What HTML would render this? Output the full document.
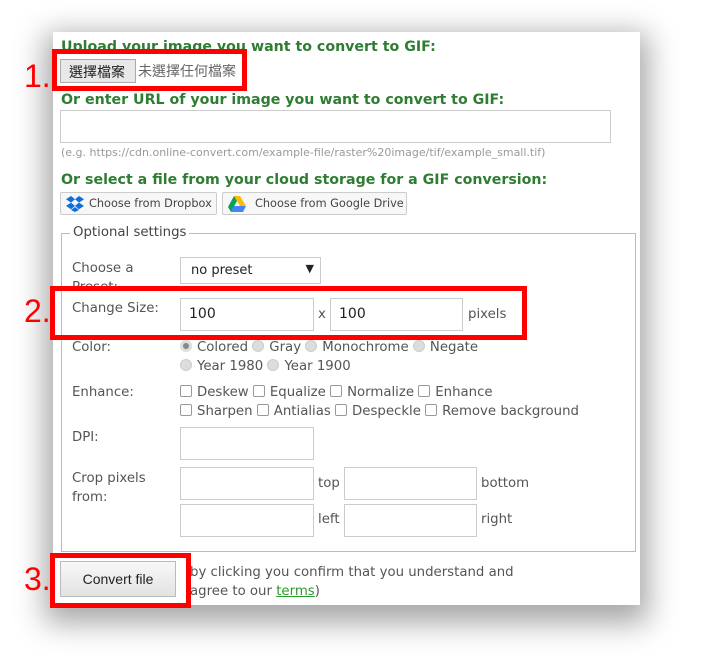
<!DOCTYPE html>
<html><head><meta charset="utf-8"><style>
*{box-sizing:border-box}
body{margin:0;width:706px;height:670px;background:#fff;font-family:"DejaVu Sans","Liberation Sans",sans-serif;font-size:13.3px;color:#555;position:relative;overflow:hidden}
.a{position:absolute;white-space:nowrap}
#panel{position:absolute;left:53px;top:32px;width:587px;height:573px;background:#fff;box-shadow:0 10px 28px 8px rgba(0,0,0,.35)}
h{position:absolute;font-weight:bold;color:#2e7d32;font-size:14.2px;white-space:nowrap}
.inp{position:absolute;border:1px solid #ccc;background:#fff;font-size:14px;color:#222;padding:7px 0 0 8px}
.red{position:absolute;border:5px solid #f00}
.num{position:absolute;color:#f00;font-size:32px;font-family:"Liberation Sans",sans-serif;line-height:32px}
.btn{position:absolute;border:1px solid #ccc;background:#f7f7f7;font-size:11.3px;color:#444;border-radius:2px;white-space:nowrap}
.rb{display:inline-block;width:12px;height:12px;border-radius:50%;background:#ddd;border:1px solid #ccc;vertical-align:-1px;margin-right:5px}
.cb{display:inline-block;width:12px;height:12px;border-radius:2px;background:#fff;border:1px solid #999;vertical-align:-1px;margin-right:5px}
</style></head><body>
<div id="panel"></div>
<h style="left:61px;top:39px">Upload your image you want to convert to GIF:</h>
<div class="a" style="left:60px;top:59px;width:76px;height:24px;border:1px solid #aaa;background:#e8e8e8;font-family:'Liberation Sans','Noto Sans CJK TC',sans-serif;font-size:14px;color:#222;padding:2px 0 0 8px">選擇檔案</div>
<div class="a" style="left:138px;top:61px;font-family:'Liberation Sans','Noto Sans CJK TC',sans-serif;font-size:14px;color:#666">未選擇任何檔案</div>
<div class="red" style="left:52px;top:49px;width:195px;height:42px"></div>
<div class="num" style="left:24px;top:60px">1.</div>
<h style="left:61px;top:92px">Or enter URL of your image you want to convert to GIF:</h>
<div class="inp" style="left:60px;top:110px;width:551px;height:33px"></div>
<div class="a" style="left:61px;top:146px;font-size:11px;color:#999">(e.g. https://cdn.online-convert.com/example-file/raster%20image/tif/example_small.tif)</div>
<h style="left:61px;top:172px">Or select a file from your cloud storage for a GIF conversion:</h>
<div class="btn" style="left:60px;top:192px;width:157px;height:23px;padding:4px 0 0 28px">Choose from Dropbox</div>
<svg class="a" style="left:66px;top:196px" width="18" height="16" viewBox="0 0 18 16"><g fill="#0d6fdc"><path d="M5 0L0 3.3 5 6.6 9 3.3z"/><path d="M13 0L9 3.3 13 6.6 18 3.3z"/><path d="M0 9.9L5 13.2 9 9.9 5 6.6z"/><path d="M18 9.9L13 13.2 9 9.9 13 6.6z"/><path d="M5 14L9 11 13 14 9 16z"/></g></svg>
<div class="btn" style="left:222px;top:192px;width:185px;height:23px;padding:4px 0 0 32px">Choose from Google Drive</div>
<svg class="a" style="left:228px;top:196px" width="18" height="16" viewBox="0 0 18 16"><path d="M6 0h6l6 10h-6z" fill="#fbbc04"/><path d="M6 0l3 5-6 11-3-5z" fill="#0f9d58"/><path d="M3 16l3-6h12l-3 6z" fill="#4285f4"/></svg>
<div class="a" style="left:61px;top:233px;width:575px;height:319px;border:1px solid #bbb"></div>
<div class="a" style="left:70px;top:225px;background:#fff;padding:0 3px;color:#444">Optional settings</div>
<div class="a" style="left:72px;top:259px;line-height:19px;height:27px;overflow:hidden;white-space:normal;width:80px">Choose a Preset:</div>
<div class="inp" style="left:180px;top:257px;width:141px;height:27px;padding:5px 0 0 10px;font-size:13px">no preset<span style="position:absolute;right:6px;top:4px;font-size:11px">▼</span></div>
<div class="a" style="left:72px;top:301px">Change Size:</div>
<div class="inp" style="left:180px;top:298px;width:134px;height:33px">100</div>
<div class="a" style="left:318px;top:307px">x</div>
<div class="inp" style="left:330px;top:298px;width:133px;height:33px">100</div>
<div class="a" style="left:468px;top:307px">pixels</div>
<div class="red" style="left:50px;top:286px;width:477px;height:54px"></div>
<div class="num" style="left:24px;top:295px">2.</div>
<div class="a" style="left:72px;top:340px">Color:</div>
<div class="a" style="left:180px;top:340px"><span class="rb" style="background:#888;border:3px solid #ddd"></span>Colored <span class="rb"></span>Gray <span class="rb"></span>Monochrome <span class="rb"></span>Negate</div>
<div class="a" style="left:180px;top:359px"><span class="rb"></span>Year 1980 <span class="rb"></span>Year 1900</div>
<div class="a" style="left:72px;top:385px">Enhance:</div>
<div class="a" style="left:180px;top:385px"><span class="cb"></span>Deskew <span class="cb"></span>Equalize <span class="cb"></span>Normalize <span class="cb"></span>Enhance</div>
<div class="a" style="left:180px;top:404px"><span class="cb"></span>Sharpen <span class="cb"></span>Antialias <span class="cb"></span>Despeckle <span class="cb"></span>Remove background</div>
<div class="a" style="left:72px;top:430px">DPI:</div>
<div class="inp" style="left:180px;top:427px;width:134px;height:33px"></div>
<div class="a" style="left:72px;top:469px;line-height:19px">Crop pixels<br>from:</div>
<div class="inp" style="left:180px;top:467px;width:134px;height:33px"></div>
<div class="a" style="left:318px;top:476px">top</div>
<div class="inp" style="left:344px;top:467px;width:133px;height:33px"></div>
<div class="a" style="left:481px;top:476px">bottom</div>
<div class="inp" style="left:180px;top:504px;width:134px;height:33px"></div>
<div class="a" style="left:318px;top:512px">left</div>
<div class="inp" style="left:344px;top:504px;width:133px;height:33px"></div>
<div class="a" style="left:481px;top:512px">right</div>
<div class="a" style="left:60px;top:561px;width:116px;height:36px;border:1px solid #bbb;background:linear-gradient(#f8f8f8,#e2e2e2);color:#222;font-family:'Liberation Sans',sans-serif;font-size:14px;text-align:center;line-height:34px">Convert file</div>
<div class="red" style="left:50px;top:553px;width:141px;height:55px"></div>
<div class="num" style="left:24px;top:563px">3.</div>
<div class="a" style="left:190px;top:563px;line-height:19px">by clicking you confirm that you understand and<br>agree to our <span style="color:#2a9a2a;text-decoration:underline">terms</span>)</div>
</body></html>
